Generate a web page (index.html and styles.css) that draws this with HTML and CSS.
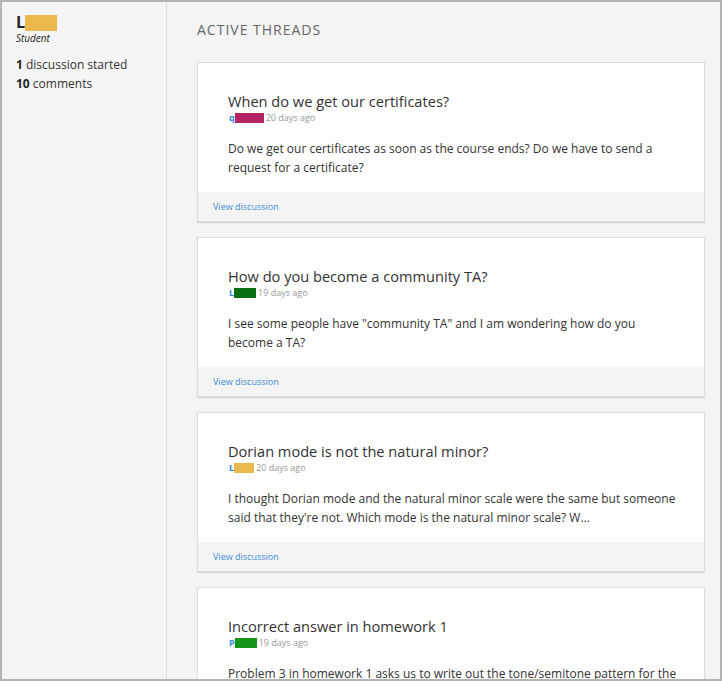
FILE: index.html
```html
<!DOCTYPE html>
<html>
<head>
<meta charset="utf-8">
<link rel="stylesheet" href="styles.css">
</head>
<body>
<div class="frame">
  <aside class="sidebar">
    <div class="name">L<span class="redact redact-yellow big"></span></div>
    <div class="role">Student</div>
    <div class="stats">
      <div><b>1</b> discussion started</div>
      <div><b>10</b> comments</div>
    </div>
  </aside>
  <main class="main">
    <h2 class="heading">Active Threads</h2>
    <div class="card">
      <div class="card-body">
        <h3 class="title">When do we get our certificates?</h3>
        <div class="meta"><span class="author">q</span><span class="redact redact-magenta w29"></span><span class="ago">20 days ago</span></div>
        <p class="text">Do we get our certificates as soon as the course ends? Do we have to send a request for a certificate?</p>
      </div>
      <div class="card-foot"><a class="link">View discussion</a></div>
    </div>
    <div class="card">
      <div class="card-body">
        <h3 class="title">How do you become a community TA?</h3>
        <div class="meta"><span class="author">L</span><span class="redact redact-dgreen w22"></span><span class="ago">19 days ago</span></div>
        <p class="text">I see some people have "community TA" and I am wondering how do you become a TA?</p>
      </div>
      <div class="card-foot"><a class="link">View discussion</a></div>
    </div>
    <div class="card">
      <div class="card-body">
        <h3 class="title">Dorian mode is not the natural minor?</h3>
        <div class="meta"><span class="author">L</span><span class="redact redact-yellow w20"></span><span class="ago">20 days ago</span></div>
        <p class="text">I thought Dorian mode and the natural minor scale were the same but someone said that they're not. Which mode is the natural minor scale? W…</p>
      </div>
      <div class="card-foot"><a class="link">View discussion</a></div>
    </div>
    <div class="card">
      <div class="card-body">
        <h3 class="title">Incorrect answer in homework 1</h3>
        <div class="meta"><span class="author">P</span><span class="redact redact-green w22"></span><span class="ago">19 days ago</span></div>
        <p class="text">Problem 3 in homework 1 asks us to write out the tone/semitone pattern for the natural minor scale.</p>
      </div>
      <div class="card-foot"><a class="link">View discussion</a></div>
    </div>
  </main>
</div>
</body>
</html>
```
FILE: styles.css
```css
html, body {
  margin: 0;
  padding: 0;
}
body {
  font-family: "Open Sans", "DejaVu Sans", sans-serif;
  color: #333;
  background: #fff;
}
.frame {
  box-sizing: border-box;
  width: 722px;
  height: 681px;
  border: 2px solid #b4b4b4;
  background: #f4f4f4;
  display: flex;
  overflow: hidden;
}
.sidebar {
  width: 165px;
  flex: none;
  border-right: 1px solid #dcdcdc;
  background: #f5f5f5;
  padding: 12px 0 0 14px;
  box-sizing: border-box;
}
.name {
  font-size: 16px;
  font-weight: 700;
  line-height: 17px;
  display: flex;
  align-items: center;
  color: #222;
}
.redact {
  display: inline-block;
  vertical-align: middle;
}
.redact.big {
  width: 32px;
  height: 16px;
}
.redact-yellow { background: #ebb84d; }
.redact-magenta { background: #b72466; }
.redact-dgreen { background: #0b6d12; }
.redact-green { background: #14961a; }
.role {
  font-size: 10px;
  font-style: italic;
  line-height: 14px;
  margin-top: 0;
  color: #222;
}
.stats {
  margin-top: 10px;
  font-size: 12px;
  line-height: 19px;
  color: #333;
}
.stats b {
  color: #222;
}
.main {
  flex: 1;
  padding: 0 15px 0 30px;
  box-sizing: border-box;
}
.heading {
  margin: 19px 0 0;
  font-size: 14px;
  font-weight: 400;
  text-transform: uppercase;
  letter-spacing: 1px;
  line-height: 18px;
  color: #666;
}
.card {
  margin-top: 23px;
  background: #fff;
  border: 1px solid #dedede;
  box-shadow: 0 1px 1px rgba(0,0,0,0.12);
}
.card + .card {
  margin-top: 15px;
}
.card-body {
  padding: 28px 26px 15px 30px;
}
.title {
  margin: 0;
  font-size: 14.6px;
  font-weight: 400;
  line-height: 21px;
  color: #333;
}
.meta {
  display: flex;
  align-items: center;
  height: 12px;
  font-size: 9px;
  line-height: 12px;
}
.author {
  color: #2b87d6;
  font-weight: 700;
  margin-left: 1px;
}
.meta .redact {
  height: 10px;
}
.w29 { width: 29px; }
.w22 { width: 22px; }
.w20 { width: 20px; }
.ago {
  color: #999;
  margin-left: 2px;
}
.text {
  margin: 15px 0 0;
  font-size: 12px;
  line-height: 19px;
  color: #333;
}
.card-foot {
  background: #f4f4f4;
  height: 29px;
  padding: 0 15px;
  display: flex;
  align-items: center;
}
.link {
  font-size: 9px;
  color: #3a8ad4;
}
```
